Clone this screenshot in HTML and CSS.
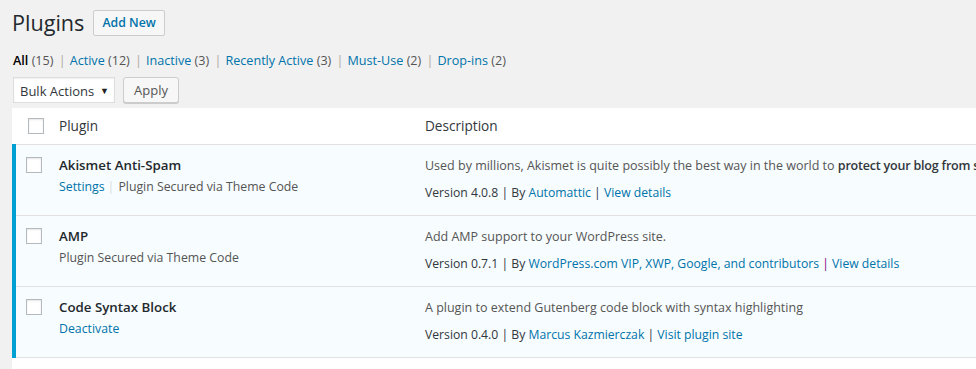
FILE: index.html
```html
<!DOCTYPE html>
<html lang="en">
<head>
  <meta charset="UTF-8" />
  <title>Plugins</title>
  <link rel="stylesheet" href="styles.css">
</head>
<body>
  <div class="wrap">
    <div class="title-bar">
      <h1>Plugins</h1>
      <a class="page-title-action" href="#">Add New</a>
    </div>

    <ul class="subsubsub">
      <li><a class="current" href="#">All <span class="count">(15)</span></a> |</li>
      <li><a href="#">Active <span class="count">(12)</span></a> |</li>
      <li><a href="#">Inactive <span class="count">(3)</span></a> |</li>
      <li><a href="#">Recently Active <span class="count">(3)</span></a> |</li>
      <li><a href="#">Must-Use <span class="count">(2)</span></a> |</li>
      <li><a href="#">Drop-ins <span class="count">(2)</span></a></li>
    </ul>

    <div class="tablenav">
      <div class="select-box">Bulk Actions <span class="arrow">▼</span></div>
      <button class="button">Apply</button>
    </div>

    <div class="table-clip">
      <table class="plugins">
        <thead>
          <tr>
            <td class="check-column"><span class="cb"></span></td>
            <th class="col-name">Plugin</th>
            <th class="col-desc">Description</th>
          </tr>
        </thead>
        <tbody>
          <tr class="active">
            <th class="check-column"><span class="cb"></span></th>
            <td class="plugin-title">
              <strong>Akismet Anti-Spam</strong>
              <div class="row-actions"><a href="#">Settings</a><span class="sep">|</span>Plugin Secured via Theme Code</div>
            </td>
            <td class="column-description">
              <p>Used by millions, Akismet is quite possibly the best way in the world to <strong>protect your blog from spam</strong>. It keeps your site protected even while you sleep.</p>
              <div class="meta">Version 4.0.8 | By <a href="#">Automattic</a> | <a href="#">View details</a></div>
            </td>
          </tr>
          <tr class="active">
            <th class="check-column"><span class="cb"></span></th>
            <td class="plugin-title">
              <strong>AMP</strong>
              <div class="row-actions plain">Plugin Secured via Theme Code</div>
            </td>
            <td class="column-description">
              <p>Add AMP support to your WordPress site.</p>
              <div class="meta">Version 0.7.1 | By <a href="#">WordPress.com VIP, XWP, Google, and contributors</a> <span class="visited">|</span> <a href="#">View details</a></div>
            </td>
          </tr>
          <tr class="active">
            <th class="check-column"><span class="cb"></span></th>
            <td class="plugin-title">
              <strong>Code Syntax Block</strong>
              <div class="row-actions"><a href="#">Deactivate</a></div>
            </td>
            <td class="column-description">
              <p>A plugin to extend Gutenberg code block with syntax highlighting</p>
              <div class="meta">Version 0.4.0 | By <a href="#">Marcus Kazmierczak</a> | <a href="#">Visit plugin site</a></div>
            </td>
          </tr>
        </tbody>
        <tfoot>
          <tr>
            <td class="check-column"></td>
            <td class="col-name"></td>
            <td class="col-desc"></td>
          </tr>
        </tfoot>
      </table>
    </div>
  </div>
</body>
</html>
```

FILE: styles.css
```css
html, body {
  margin: 0;
  height: 100%;
  overflow: hidden;
}
body {
  background: #f1f1f1;
  color: #444;
  font-family: 'Open Sans', sans-serif;
  font-size: 12.3px;
  line-height: 1.4em;
}
a {
  color: #0073aa;
  text-decoration: none;
}
.wrap {
  padding: 0 0 0 12px;
}
.title-bar {
  display: flex;
  align-items: center;
  padding-top: 9px;
  height: 28px;
}
.title-bar h1 {
  margin: 0 9px 0 0;
  font-size: 21.6px;
  font-weight: 400;
  color: #23282d;
  line-height: 28px;
}
.page-title-action {
  display: inline-block;
  padding: 3px 8px 4px;
  margin-top: -1px;
  border: 1px solid #ccc;
  border-radius: 2px;
  background: #f7f7f7;
  font-size: 12.3px;
  font-weight: 600;
  line-height: 17px;
}
.subsubsub {
  list-style: none;
  margin: 15px 0 0;
  padding: 0 0 0 1px;
  display: flex;
  color: #b0a8a0;
  font-size: 12.6px;
  height: 18px;
  line-height: 18px;
}
.subsubsub li {
  margin-right: 4px;
}
.subsubsub a {
  margin-right: 2px;
}
.subsubsub .current {
  color: #000;
  font-weight: 600;
}
.subsubsub .count {
  color: #555;
  font-weight: 400;
}
.tablenav {
  display: flex;
  gap: 8px;
  margin-top: 7px;
  height: 28px;
  padding-left: 1px;
}
.select-box {
  width: 102px;
  height: 26px;
  box-sizing: border-box;
  padding: 0 5px 0 6px;
  border: 1px solid #ddd;
  background: #fff;
  box-shadow: inset 0 1px 2px rgba(0, 0, 0, 0.07);
  color: #32373c;
  font-size: 13px;
  line-height: 26px;
  white-space: nowrap;
  display: flex;
  justify-content: space-between;
}
.select-box .arrow {
  font-size: 9px;
  color: #222;
}
.button {
  height: 26px;
  padding: 0 10px;
  border: 1px solid #ccc;
  border-radius: 3px;
  background: #f7f7f7;
  box-shadow: 0 1px 0 #ccc;
  color: #555;
  font-family: inherit;
  font-size: 13px;
  line-height: 24px;
}
.table-clip {
  margin-top: 3px;
  width: 1400px;
}
.plugins {
  width: 100%;
  border-collapse: collapse;
  background: #fff;
  box-shadow: 0 1px 1px rgba(0, 0, 0, 0.04);
  table-layout: fixed;
}
.plugins thead td, .plugins thead th,
.plugins tfoot td {
  height: 36px;
  box-sizing: border-box;
  padding: 0;
  text-align: left;
  font-weight: 400;
  font-size: 13.6px;
  color: #32373c;
  vertical-align: middle;
}
.plugins thead td, .plugins thead th {
  border-bottom: 1px solid #e1e1e1;
}
.check-column {
  width: 34px;
  padding: 0;
  vertical-align: top;
}
.plugins thead .cb {
  margin-top: 1px;
}
.cb {
  display: block;
  width: 16px;
  height: 16px;
  box-sizing: border-box;
  margin: 0 0 0 14px;
  border: 1px solid #b4b9be;
  background: #fff;
  box-shadow: inset 0 1px 2px rgba(0, 0, 0, 0.1);
}
.col-name {
  width: 367px;
  padding-left: 11px !important;
}
.col-desc {
  padding-left: 10px !important;
}
.plugins tbody tr {
  height: 71px;
}
.plugins tbody td, .plugins tbody th {
  border-bottom: 1px solid #e1e1e1;
  vertical-align: top;
  text-align: left;
  font-weight: 400;
}
.plugins .active td, .plugins .active th {
  background: #f7fcfe;
}
.plugins .active .check-column {
  border-left: 4px solid #00a0d2;
  box-sizing: border-box;
  padding-top: 12px;
}
.plugins .active .check-column .cb {
  margin-left: 10px;
}
.plugin-title {
  padding: 9px 10px 0 11px;
}
.plugin-title strong {
  display: block;
  font-size: 13.3px;
  font-weight: 600;
  color: #23282d;
  line-height: 22px;
}
.row-actions {
  margin-top: 2px;
  color: #555;
  line-height: 18px;
}
.row-actions .sep {
  color: #ddd;
  margin: 0 4px 0 3px;
}
.column-description {
  padding: 12px 10px 0;
  color: #555;
  font-size: 12.5px;
  white-space: nowrap;
}
.column-description p {
  margin: 0;
  line-height: 18px;
}
.column-description strong {
  font-weight: 600;
  color: #32373c;
  letter-spacing: -0.2px;
}
.meta {
  margin-top: 9px;
  line-height: 18px;
  font-size: 12.2px;
  color: #32373c;
}
.meta .visited {
  color: #800080;
}
```
